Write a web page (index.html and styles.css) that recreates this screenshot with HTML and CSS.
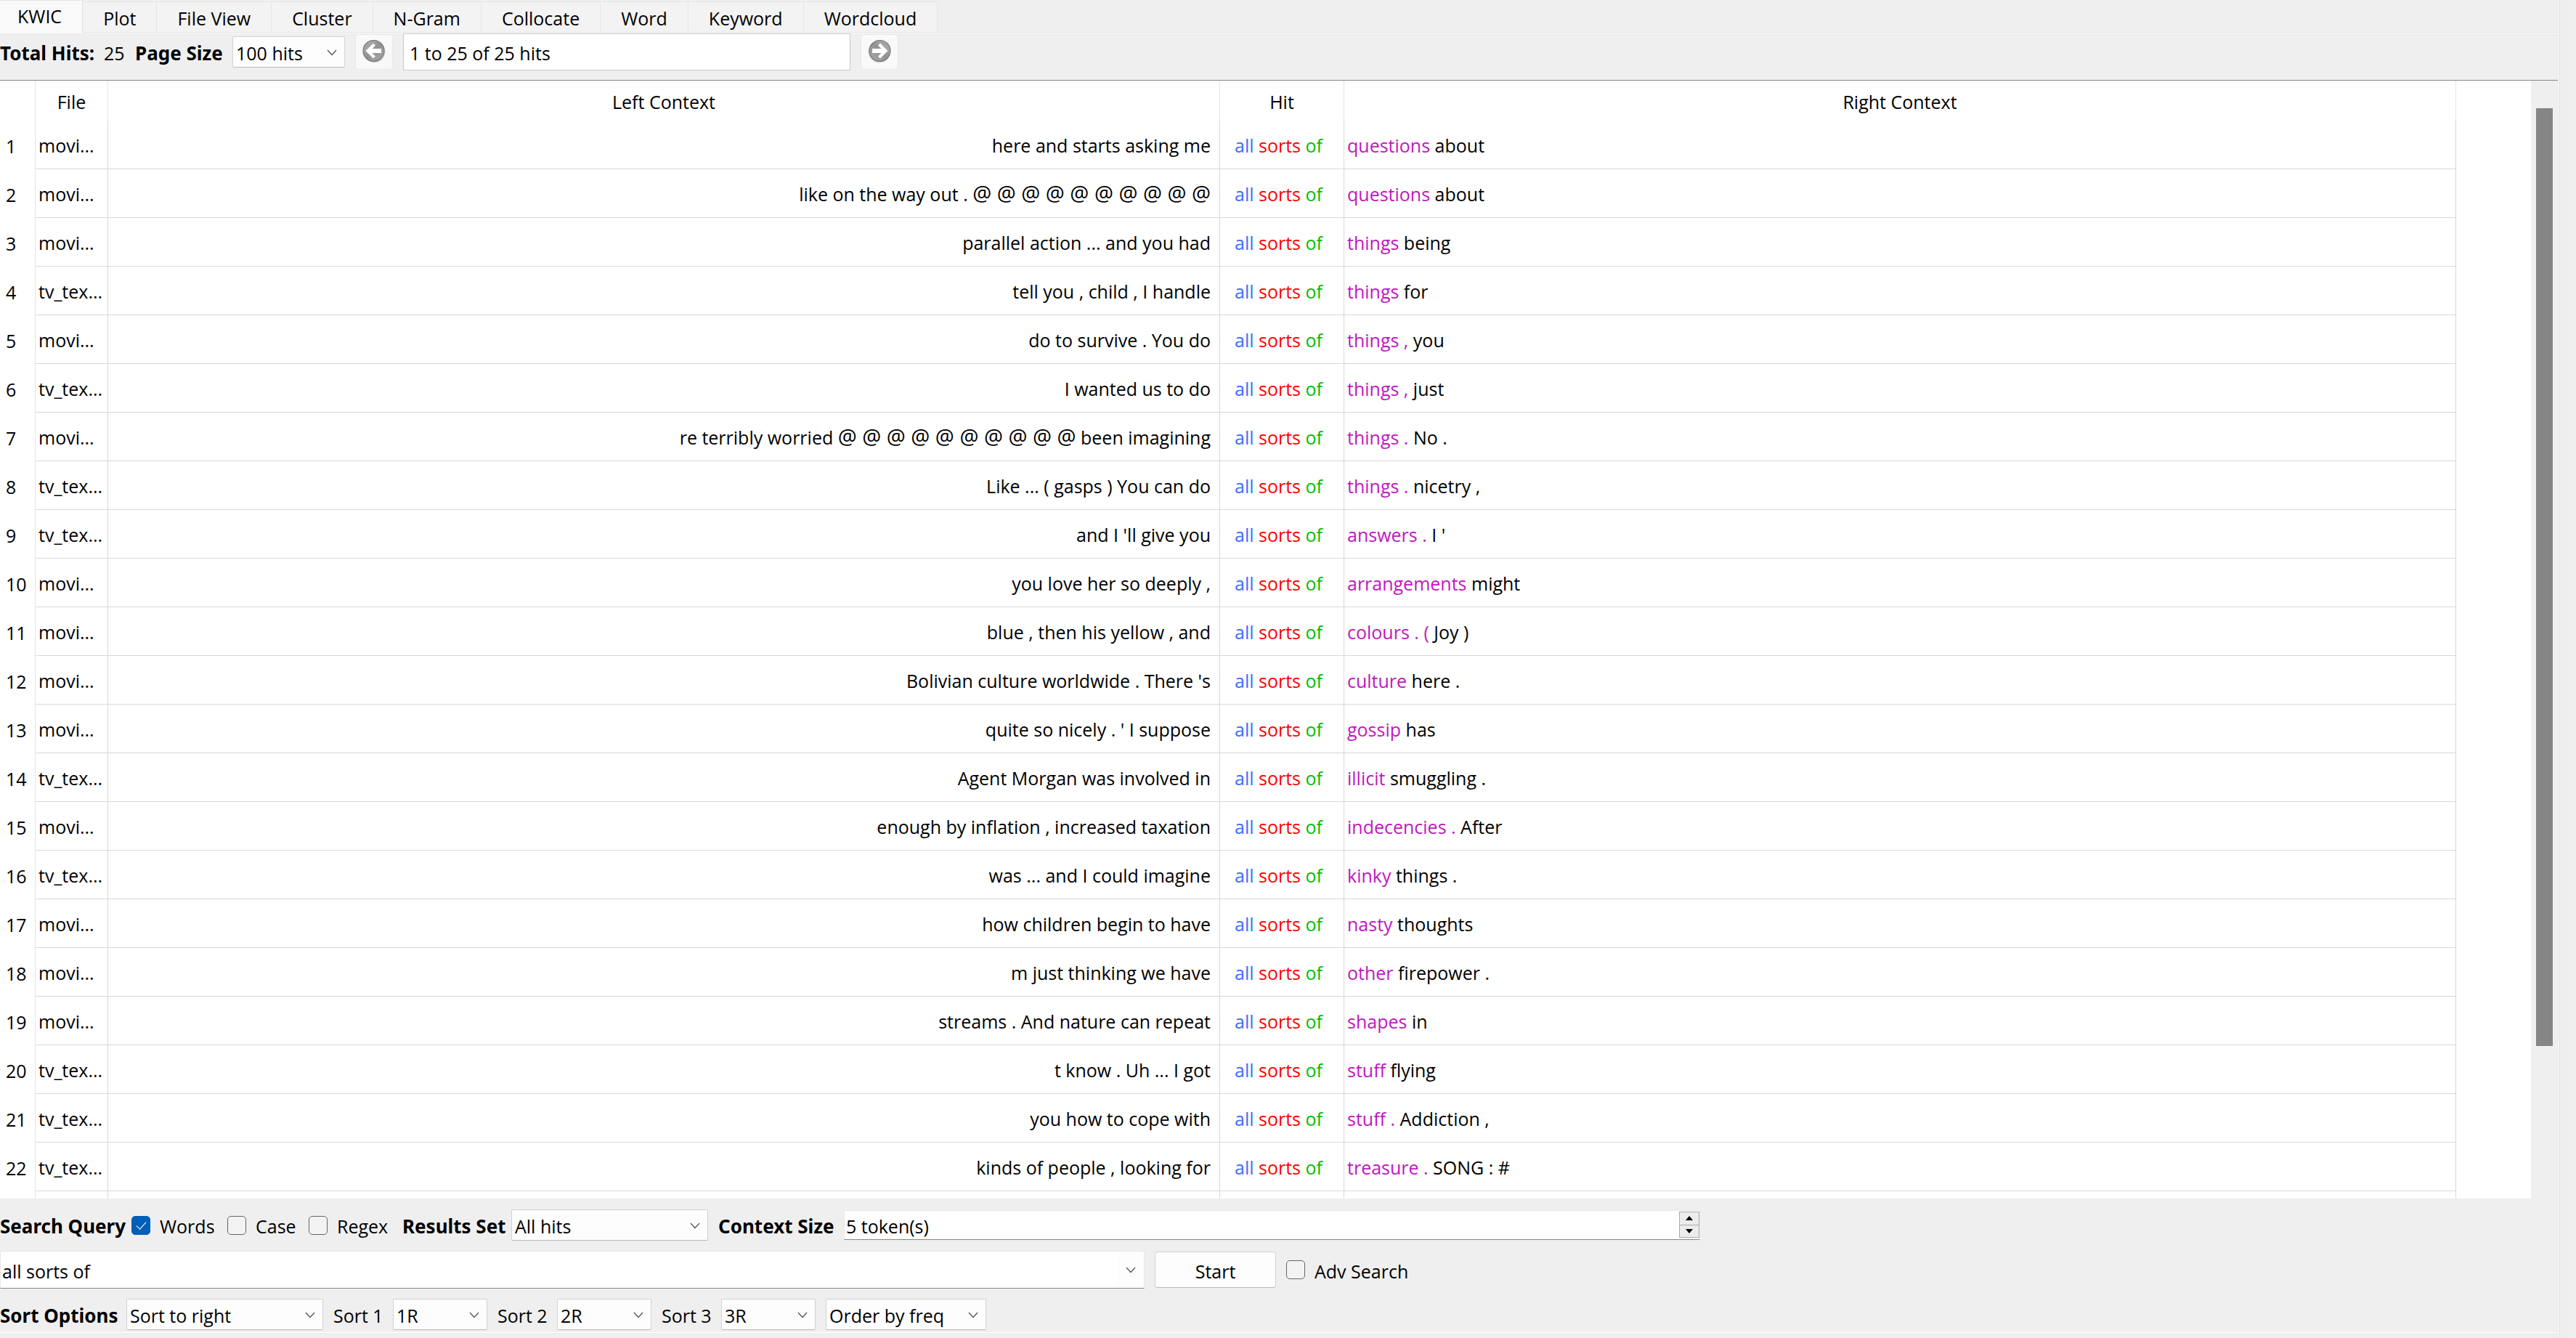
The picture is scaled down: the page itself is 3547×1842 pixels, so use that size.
FILE: index.html
```html
<!DOCTYPE html>
<html lang="en">
<head>
<meta charset="utf-8">
<title>KWIC</title>
<link rel="stylesheet" href="styles.css">
</head>
<body>
<svg class="defs" aria-hidden="true">
  <symbol id="chevron" viewBox="0 0 14 9"><path d="M1 1l6 6.500l6-6.500" fill="none" stroke="#555" stroke-width="1.300"/></symbol>
  <linearGradient id="ball" x1="0" y1="0" x2="1" y2="1"><stop offset="0" stop-color="#b4b4b4"/><stop offset=".5" stop-color="#929292"/><stop offset="1" stop-color="#ababab"/></linearGradient>
  <symbol id="arrow" viewBox="0 0 32 34">
    <circle cx="16.500" cy="17.500" r="15" fill="#d8d8d8"/>
    <circle cx="15.500" cy="16" r="14.500" fill="url(#ball)" stroke="#777" stroke-width="1.200"/>
    <path d="M4.500 16L15 5.500l3 3l-4.500 4.500h12.500v6H13.500l4.500 4.500l-3 3z" fill="#fff"/>
  </symbol>
</svg>
<main class="window">
  <nav class="tabs" role="tablist">
    <button class="tab active" role="tab" aria-selected="true">KWIC</button>
    <button class="tab" role="tab">Plot</button>
    <button class="tab" role="tab">File View</button>
    <button class="tab" role="tab">Cluster</button>
    <button class="tab" role="tab">N-Gram</button>
    <button class="tab" role="tab">Collocate</button>
    <button class="tab" role="tab">Word</button>
    <button class="tab" role="tab">Keyword</button>
    <button class="tab" role="tab">Wordcloud</button>
  </nav>

  <section class="toolbar">
    <span class="caption total">Total Hits:</span>
    <span class="text count">25</span>
    <label class="caption page" for="page-size">Page Size</label>
    <span class="combo w155"><select id="page-size"><option>100 hits</option></select><svg><use href="#chevron"/></svg></span>
    <button class="nav" aria-label="Previous page"><svg><use href="#arrow"/></svg></button>
    <input class="range" type="text" aria-label="Hit range" value="1 to 25 of 25 hits">
    <button class="nav next" aria-label="Next page"><svg><use href="#arrow"/></svg></button>
  </section>

  <section class="results">
    <div class="viewport">
    <table>
      <colgroup><col class="c-num"><col class="c-file"><col><col class="c-hit"><col><col class="c-rest"></colgroup>
      <thead><tr><th></th><th>File</th><th>Left Context</th><th>Hit</th><th>Right Context</th><th></th></tr></thead>
      <tbody>
        <tr><th>1</th><td>movi...</td><td>here and starts asking me</td><td><i>all</i> <b>sorts</b> <u>of</u></td><td><em>questions</em> about</td><td></td></tr>
        <tr><th>2</th><td>movi...</td><td>like on the way out . <span class="masked">@ @ @ @ @ @ @ @ @ @</span></td><td><i>all</i> <b>sorts</b> <u>of</u></td><td><em>questions</em> about</td><td></td></tr>
        <tr><th>3</th><td>movi...</td><td>parallel action ... and you had</td><td><i>all</i> <b>sorts</b> <u>of</u></td><td><em>things</em> being</td><td></td></tr>
        <tr><th>4</th><td>tv_tex...</td><td>tell you , child , I handle</td><td><i>all</i> <b>sorts</b> <u>of</u></td><td><em>things</em> for</td><td></td></tr>
        <tr><th>5</th><td>movi...</td><td>do to survive . You do</td><td><i>all</i> <b>sorts</b> <u>of</u></td><td><em>things ,</em> you</td><td></td></tr>
        <tr><th>6</th><td>tv_tex...</td><td>I wanted us to do</td><td><i>all</i> <b>sorts</b> <u>of</u></td><td><em>things ,</em> just</td><td></td></tr>
        <tr><th>7</th><td>movi...</td><td>re terribly worried <span class="masked">@ @ @ @ @ @ @ @ @ @</span> been imagining</td><td><i>all</i> <b>sorts</b> <u>of</u></td><td><em>things .</em> No .</td><td></td></tr>
        <tr><th>8</th><td>tv_tex...</td><td>Like ... ( gasps ) You can do</td><td><i>all</i> <b>sorts</b> <u>of</u></td><td><em>things .</em> nicetry ,</td><td></td></tr>
        <tr><th>9</th><td>tv_tex...</td><td>and I 'll give you</td><td><i>all</i> <b>sorts</b> <u>of</u></td><td><em>answers .</em> I '</td><td></td></tr>
        <tr><th>10</th><td>movi...</td><td>you love her so deeply ,</td><td><i>all</i> <b>sorts</b> <u>of</u></td><td><em>arrangements</em> might</td><td></td></tr>
        <tr><th>11</th><td>movi...</td><td>blue , then his yellow , and</td><td><i>all</i> <b>sorts</b> <u>of</u></td><td><em>colours . (</em> Joy )</td><td></td></tr>
        <tr><th>12</th><td>movi...</td><td>Bolivian culture worldwide . There 's</td><td><i>all</i> <b>sorts</b> <u>of</u></td><td><em>culture</em> here .</td><td></td></tr>
        <tr><th>13</th><td>movi...</td><td>quite so nicely . ' I suppose</td><td><i>all</i> <b>sorts</b> <u>of</u></td><td><em>gossip</em> has</td><td></td></tr>
        <tr><th>14</th><td>tv_tex...</td><td>Agent Morgan was involved in</td><td><i>all</i> <b>sorts</b> <u>of</u></td><td><em>illicit</em> smuggling .</td><td></td></tr>
        <tr><th>15</th><td>movi...</td><td>enough by inflation , increased taxation</td><td><i>all</i> <b>sorts</b> <u>of</u></td><td><em>indecencies .</em> After</td><td></td></tr>
        <tr><th>16</th><td>tv_tex...</td><td>was ... and I could imagine</td><td><i>all</i> <b>sorts</b> <u>of</u></td><td><em>kinky</em> things .</td><td></td></tr>
        <tr><th>17</th><td>movi...</td><td>how children begin to have</td><td><i>all</i> <b>sorts</b> <u>of</u></td><td><em>nasty</em> thoughts</td><td></td></tr>
        <tr><th>18</th><td>movi...</td><td>m just thinking we have</td><td><i>all</i> <b>sorts</b> <u>of</u></td><td><em>other</em> firepower .</td><td></td></tr>
        <tr><th>19</th><td>movi...</td><td>streams . And nature can repeat</td><td><i>all</i> <b>sorts</b> <u>of</u></td><td><em>shapes</em> in</td><td></td></tr>
        <tr><th>20</th><td>tv_tex...</td><td>t know . Uh ... I got</td><td><i>all</i> <b>sorts</b> <u>of</u></td><td><em>stuff</em> flying</td><td></td></tr>
        <tr><th>21</th><td>tv_tex...</td><td>you how to cope with</td><td><i>all</i> <b>sorts</b> <u>of</u></td><td><em>stuff .</em> Addiction ,</td><td></td></tr>
        <tr><th>22</th><td>tv_tex...</td><td>kinds of people , looking for</td><td><i>all</i> <b>sorts</b> <u>of</u></td><td><em>treasure .</em> SONG : #</td><td></td></tr>
        <tr><th></th><td></td><td></td><td></td><td></td><td></td></tr>
      </tbody>
    </table>
    </div>
    <div class="scrollbar"><div class="thumb"></div></div>
  </section>

  <section class="panel">
    <div class="row">
      <span class="caption query">Search Query</span>
      <label class="check w118"><input type="checkbox" checked><span>Words</span></label>
      <label class="check w98"><input type="checkbox"><span>Case</span></label>
      <label class="check w115"><input type="checkbox"><span>Regex</span></label>
      <label class="caption results-set" for="results-set">Results Set</label>
      <span class="combo w271"><select id="results-set"><option>All hits</option></select><svg><use href="#chevron"/></svg></span>
      <label class="caption context" for="context-size">Context Size</label>
      <span class="spin">
        <input id="context-size" type="text" value="5 token(s)">
        <span class="steps">
          <button aria-label="Increase"><svg viewBox="0 0 10 6"><path d="M0 6L5 0l5 6z"/></svg></button>
          <button aria-label="Decrease"><svg viewBox="0 0 10 6"><path d="M0 0h10L5 6z"/></svg></button>
        </span>
      </span>
    </div>
    <div class="row">
      <span class="search">
        <input type="text" aria-label="Search Query" value="all sorts of">
        <button aria-label="History"><svg><use href="#chevron"/></svg></button>
      </span>
      <button class="start">Start</button>
      <label class="check"><input type="checkbox"><span>Adv Search</span></label>
    </div>
    <div class="row">
      <label class="caption options" for="sort-by">Sort Options</label>
      <span class="combo w271"><select id="sort-by"><option>Sort to right</option></select><svg><use href="#chevron"/></svg></span>
      <label class="text sort" for="sort1">Sort 1</label>
      <span class="combo w130"><select id="sort1"><option>1R</option></select><svg><use href="#chevron"/></svg></span>
      <label class="text sort" for="sort2">Sort 2</label>
      <span class="combo w130"><select id="sort2"><option>2R</option></select><svg><use href="#chevron"/></svg></span>
      <label class="text sort" for="sort3">Sort 3</label>
      <span class="combo w130"><select id="sort3"><option>3R</option></select><svg><use href="#chevron"/></svg></span>
      <span class="combo w221"><select aria-label="Order"><option>Order by freq</option></select><svg><use href="#chevron"/></svg></span>
    </div>
  </section>
</main>
</body>
</html>
```
FILE: styles.css
```css
* { box-sizing: border-box; }
body {
  margin: 0;
  background: #efefef;
  color: #000;
  font: 25px/34px "Open Sans", "Noto Sans", sans-serif;
  overflow: hidden;
}
button, input, select { font: inherit; color: inherit; margin: 0; border-radius: 0; outline: 0; }
button { padding: 0; }
svg { display: block; }
.defs { position: absolute; width: 0; height: 0; }

.window {
  display: flex;
  flex-direction: column;
  height: 100vh;
  margin-right: 22px;
  border-right: 1px solid #e0e0e0;
  box-shadow: inset -1px 0 #f9f9f9;
  padding-right: 2px;
}

/* tabs */
.tabs {
  display: flex;
  align-items: flex-end;
  height: 46px;
  border-bottom: 1px solid #f9f9f9;
  box-shadow: inset 0 -1px #e5e5e5;
}
.tab {
  height: 43px;
  padding: 3px 28px 0;
  border: solid #e5e5e5;
  border-width: 1px 1px 1px 0;
  background: #f3f3f3;
  white-space: nowrap;
}
.tab.active {
  height: 45px;
  padding: 0 28px 2px 24px;
  border-bottom: 0;
  background: #f9f9f9;
}

/* paging toolbar */
.toolbar {
  display: flex;
  align-items: center;
  gap: 14px;
  height: 64px;
  padding-bottom: 13px;
}
.caption { font-family: "Noto Sans", "Open Sans", sans-serif; font-size: 26px; font-weight: 700; }
.caption, .text { padding-top: 3px; white-space: nowrap; flex: none; }
.total { width: 129px; }
.count { width: 29px; }
.page { width: 120px; }

.combo { position: relative; flex: none; height: 43px; }
.combo select {
  appearance: none;
  display: block;
  width: 100%;
  height: 100%;
  padding: 3px 30px 0 4px;
  border: 1px solid #d2d2d2;
  border-bottom-color: #b9b9b9;
  border-radius: 2px;
  background: #fdfdfd;
}
.combo svg { position: absolute; right: 11px; top: 18px; width: 14px; height: 9px; pointer-events: none; }
.w155 { width: 155px; }
.w271 { width: 271px; }
.w130 { width: 130px; }
.w221 { width: 221px; }

.nav {
  display: flex;
  justify-content: center;
  width: 52px;
  height: 49px;
  padding-top: 6px;
  border: 1px solid #e8e8e8;
  border-radius: 4px;
  background: #f9f9f9;
}
.nav svg { width: 32px; height: 34px; }
.next svg { transform: scaleX(-1); }
.range {
  width: 616px;
  height: 51px;
  padding: 3px 8px 0;
  border: 1px solid #c8c8c8;
  background: #fff;
}

/* results table */
.results {
  display: flex;
  flex: 1;
  min-height: 0;
  border-top: 1px solid #828790;
}
.viewport { flex: 1; overflow: hidden; background: #fff; }
table { width: 100%; table-layout: fixed; border-collapse: separate; border-spacing: 0; }
.c-num { width: 49px; }
.c-file { width: 100px; }
.c-hit { width: 171px; }
.c-rest { width: 103px; }
th, td { padding: 0; white-space: nowrap; font-weight: 400; }
thead th { height: 55px; padding-top: 2px; border-right: 1px solid #e5e5e5; }
tbody th { padding-left: 8px; padding-top: 2px; text-align: left; border-right: 1px solid #e5e5e5; }
td { height: 67px; border-right: 1px solid #d8d8d8; border-bottom: 1px solid #d8d8d8; padding: 2px 4px 0; }
td:nth-child(3) { padding-right: 12px; text-align: right; }
td:nth-child(4) { padding-left: 20px; }
td:last-child, thead th:last-child { border: 0; }
td i, td b, td u, td em { font-style: normal; font-weight: 400; text-decoration: none; }
td i { color: #3c6eff; }
td b { color: #ff0000; }
td u { color: #00be00; }
td em { color: #c017c0; }
.masked { font-size: 29px; line-height: 0; }

.scrollbar { display: flex; width: 37px; padding: 38px 7px 0; }
.thumb { flex: none; width: 23px; height: 86%; background: #858585; }

/* search panel */
.panel {
  display: flex;
  flex-direction: column;
  gap: 14px;
  padding: 15px 0 3px;
  margin-bottom: 7px;
  border-bottom: 1px solid #fff;
}
.row { display: flex; align-items: center; gap: 14px; }
.query { width: 167px; }
.results-set { width: 136px; }
.context { width: 159px; }
.options { width: 160px; }
.sort { width: 68px; }

.check { display: flex; align-items: center; gap: 13px; flex: none; white-space: nowrap; }
.check span { padding-top: 3px; }
.check input {
  appearance: none;
  flex: none;
  width: 26px;
  height: 26px;
  border: 1px solid #666;
  border-radius: 5px;
  background: #f3f3f3;
}
.check input:checked { border-color: #005fb8; background: #005fb8; }
.check input:checked::after {
  content: "";
  display: block;
  width: 6px;
  height: 12px;
  margin: 4px 0 0 9px;
  border: solid #fff;
  border-width: 0 1px 1px 0;
  transform: rotate(42deg);
}
.w118 { width: 118px; }
.w98 { width: 98px; }
.w115 { width: 115px; }

.spin, .search {
  display: flex;
  flex: 1;
  border: 1px solid #e8e8e8;
  border-bottom-color: #868686;
  background: #fff;
}
.spin { max-width: 1179px; height: 41px; }
.search { max-width: 1576px; height: 52px; }
.spin input, .search input { flex: 1; min-width: 0; padding: 3px 2px 0; border: 0; background: none; }
.steps { display: flex; flex-direction: column; width: 28px; margin: 1px 0 2px; }
.steps button {
  display: flex;
  flex: 1;
  align-items: center;
  justify-content: center;
  border: 1px solid #aaa;
  background: #ececec;
}
.steps button + button { margin-top: -1px; }
.steps svg { width: 10px; height: 6px; }
.search button { display: flex; align-items: center; justify-content: center; width: 36px; border: 0; background: #fdfdfd; }
.search svg { width: 14px; height: 9px; }
.start {
  width: 167px;
  height: 50px;
  padding-top: 3px;
  border: 1px solid #d2d2d2;
  border-bottom-color: #b9b9b9;
  border-radius: 4px;
  background: #fdfdfd;
}
```
